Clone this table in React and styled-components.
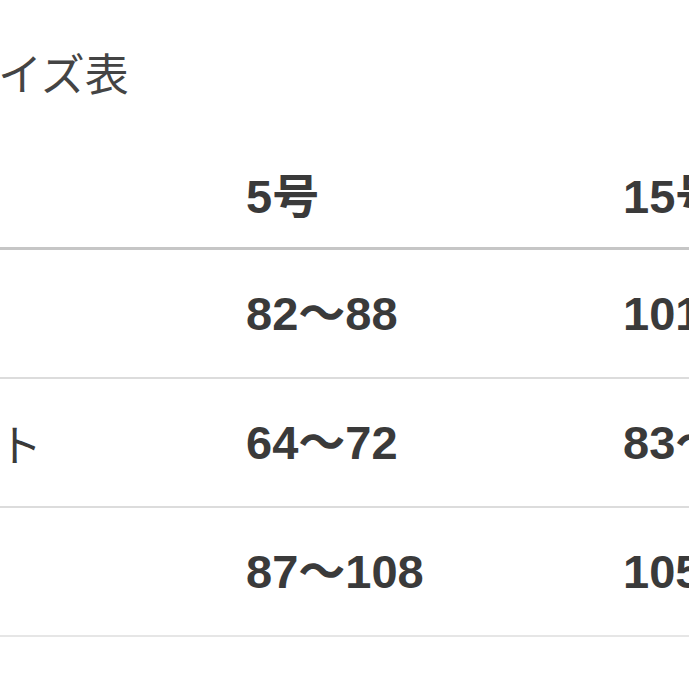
import React from 'react'
import styled, { createGlobalStyle } from 'styled-components';

const GlobalStyle = createGlobalStyle`
  html, body {
    margin: 0;
    padding: 0;
    background: #fff;
    overflow: hidden;
  }
`;

const Page = styled.div`
  width: 689px;
  height: 689px;
  overflow: hidden;
  background: #fff;
  padding-top: 50px;
  box-sizing: border-box;
`;

const Title = styled.h2`
  margin: 0 0 0 -46px;
  font-family: "Noto Sans CJK JP", sans-serif;
  font-size: 44px;
  line-height: 44px;
  font-weight: 400;
  color: #444;
  white-space: nowrap;
`;

const Table = styled.div`
  margin-left: -134px;
  width: 1134px;
`;

const Row = styled.div`
  display: grid;
  grid-template-columns: 380px 377px 377px;
  align-items: ${({head}) => head ? 'end' : 'center'};
  box-sizing: ${({head}) => head ? 'border-box' : 'content-box'};
  height: ${({head}) => head ? '156px' : '127px'};
  padding-bottom: ${({head}) => head ? '27px' : '0'};
  border-bottom: ${({head}) => head ? '3px solid #c6c6c6' : '2px solid #dcdcdc'};

  &:last-child {
    border-bottom-color: #e6e6e6;
  }
`;

const Label = styled.div`
  font-family: "Noto Sans CJK JP", sans-serif;
  font-size: 44px;
  line-height: 1;
  font-weight: 400;
  color: #3a3a3a;
  white-space: nowrap;
`;

const Value = styled.div`
  font-family: "Liberation Sans", "Noto Sans CJK JP", sans-serif;
  font-size: 47px;
  line-height: 1;
  font-weight: 700;
  color: #3a3a3a;
  white-space: nowrap;
`;

const sizes = ['5号', '15号'];

const rows = [
  { label: 'バスト', values: ['82〜88', '101〜107'] },
  { label: 'ウエスト', values: ['64〜72', '83〜91'] },
  { label: 'ヒップ', values: ['87〜108', '105〜112'] },
];

export default function App() {
  return (
    <Page>
      <GlobalStyle />
      <Title>サイズ表</Title>
      <Table>
        <Row head>
          <Label />
          {sizes.map(s => <Value key={s}>{s}</Value>)}
        </Row>
        {rows.map(r => (
          <Row key={r.label}>
            <Label>{r.label}</Label>
            {r.values.map(v => <Value key={v}>{v}</Value>)}
          </Row>
        ))}
      </Table>
    </Page>
  )
}
